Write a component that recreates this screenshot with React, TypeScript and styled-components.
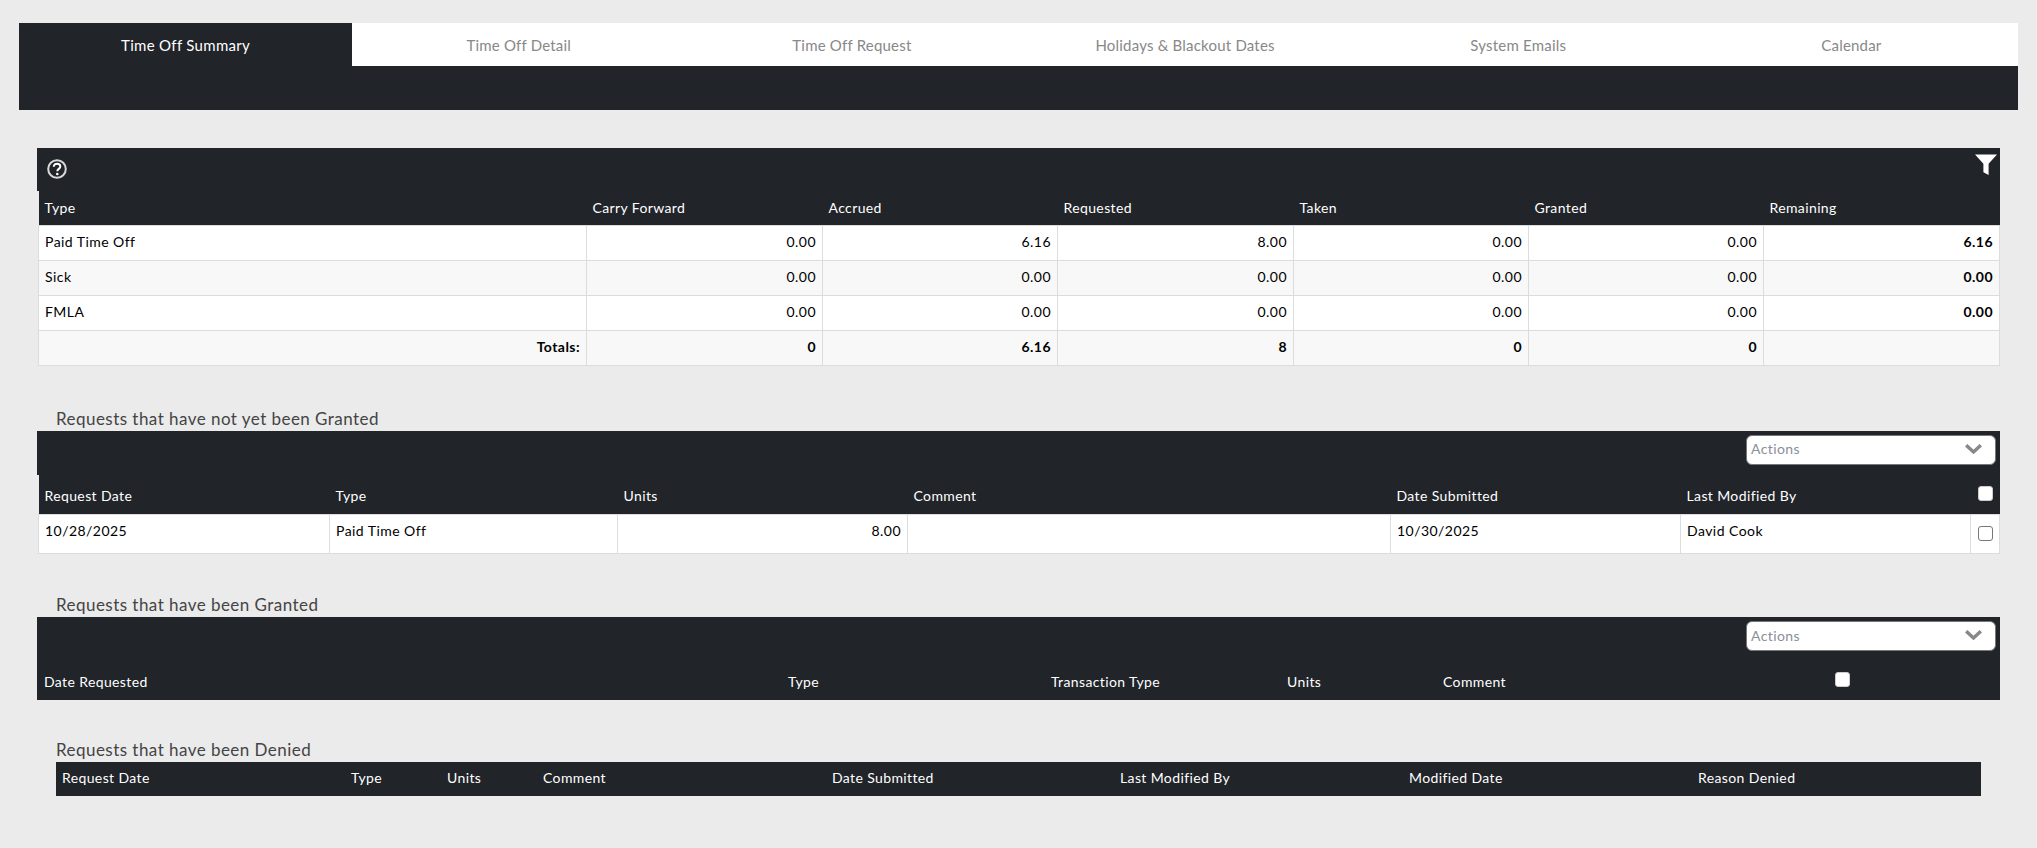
import { createGlobalStyle, styled } from 'styled-components'

const TABS = [
  'Time Off Summary',
  'Time Off Detail',
  'Time Off Request',
  'Holidays & Blackout Dates',
  'System Emails',
  'Calendar',
]

const SUMMARY_WIDTHS = [548, 236, 235, 236, 235, 235, 236]
const SUMMARY_HEAD = ['Type', 'Carry Forward', 'Accrued', 'Requested', 'Taken', 'Granted', 'Remaining']
const SUMMARY_ROWS = [
  ['Paid Time Off', '0.00', '6.16', '8.00', '0.00', '0.00', '6.16'],
  ['Sick', '0.00', '0.00', '0.00', '0.00', '0.00', '0.00'],
  ['FMLA', '0.00', '0.00', '0.00', '0.00', '0.00', '0.00'],
]
const SUMMARY_TOTALS = ['Totals:', '0', '6.16', '8', '0', '0', '']

const PENDING_WIDTHS = [291, 288, 290, 483, 290, 290, 29]
const PENDING_HEAD = ['Request Date', 'Type', 'Units', 'Comment', 'Date Submitted', 'Last Modified By']

const GRANTED_WIDTHS = [744, 263, 236, 156, 250, 314]
const GRANTED_HEAD = ['Date Requested', 'Type', 'Transaction Type', 'Units', 'Comment']

const DENIED_WIDTHS = [289, 96, 96, 289, 288, 289, 289, 289]
const DENIED_HEAD = [
  'Request Date',
  'Type',
  'Units',
  'Comment',
  'Date Submitted',
  'Last Modified By',
  'Modified Date',
  'Reason Denied',
]

const HelpIcon = () => (
  <svg width="20" height="20" viewBox="0 0 20 20" fill="none">
    <circle cx="10" cy="10" r="8.8" stroke="#d8d8d8" strokeWidth="2" />
    <path d="M6.8 7.8c0-1.9 1.4-3 3.3-3s3.2 1 3.2 2.7c0 2.4-3 2.4-3 4.8" stroke="#fff" strokeWidth="2" />
    <circle cx="10.3" cy="15" r="1.3" fill="#fff" />
  </svg>
)

const FilterIcon = () => (
  <svg width="22" height="22" viewBox="0 0 22 22">
    <path d="M0 .5h22l-8.4 9.3V21l-5.2-2.8V9.8z" fill="#fff" />
  </svg>
)

const ChevronIcon = () => (
  <svg width="17" height="10" viewBox="0 0 17 10" fill="none">
    <path d="M1.2 1.2L8.5 8l7.3-6.8" stroke="#888" strokeWidth="3.4" />
  </svg>
)

const ActionsSelect = () => (
  <Select>
    <span>Actions</span>
    <ChevronIcon />
  </Select>
)

const Columns = ({ widths }: { widths: number[] }) => (
  <colgroup>
    {widths.map((w, i) => (
      <col key={i} width={w} />
    ))}
  </colgroup>
)

export default function App() {
  return (
    <Page>
      <GlobalStyle />
      <TabBar>
        <TabRow>
          {TABS.map((t, i) => (
            <Tab key={t} $active={i === 0}>
              {t}
            </Tab>
          ))}
        </TabRow>
      </TabBar>

      <Panel $top={38}>
        <Toolbar $height={43} $spread>
          <HelpSlot>
            <HelpIcon />
          </HelpSlot>
          <FilterSlot>
            <FilterIcon />
          </FilterSlot>
        </Toolbar>
        <InsetTable>
          <Columns widths={SUMMARY_WIDTHS} />
          <thead>
            <tr>
              {SUMMARY_HEAD.map((h) => (
                <HeadCell key={h} $height={34} $low>
                  {h}
                </HeadCell>
              ))}
            </tr>
          </thead>
          <tbody>
            {SUMMARY_ROWS.map((row, r) => (
              <BodyRow key={row[0]} $alt={r % 2 === 1}>
                {row.map((c, i) => (
                  <BodyCell key={i} $height={35} $middle $right={i > 0} $bold={i === 6}>
                    {c}
                  </BodyCell>
                ))}
              </BodyRow>
            ))}
            <BodyRow $alt>
              {SUMMARY_TOTALS.map((c, i) => (
                <BodyCell key={i} $height={35} $middle $right $bold>
                  {c}
                </BodyCell>
              ))}
            </BodyRow>
          </tbody>
        </InsetTable>
      </Panel>

      <SectionTitle $top={43} $bottom={2}>
        Requests that have not yet been Granted
      </SectionTitle>
      <Panel>
        <Toolbar $height={44}>
          <ActionsSelect />
        </Toolbar>
        <InsetTable>
          <Columns widths={PENDING_WIDTHS} />
          <thead>
            <tr>
              {PENDING_HEAD.map((h) => (
                <HeadCell key={h} $height={40}>
                  {h}
                </HeadCell>
              ))}
              <HeadCell $height={40} $flush>
                <HeadCheck />
              </HeadCell>
            </tr>
          </thead>
          <tbody>
            <BodyRow>
              <BodyCell $height={39}>10/28/2025</BodyCell>
              <BodyCell $height={39}>Paid Time Off</BodyCell>
              <BodyCell $height={39} $right>
                8.00
              </BodyCell>
              <BodyCell $height={39} />
              <BodyCell $height={39}>10/30/2025</BodyCell>
              <BodyCell $height={39}>David Cook</BodyCell>
              <BodyCell $height={39}>
                <RowCheck />
              </BodyCell>
            </BodyRow>
          </tbody>
        </InsetTable>
      </Panel>

      <SectionTitle $top={41} $bottom={2}>
        Requests that have been Granted
      </SectionTitle>
      <Panel>
        <Toolbar $height={44}>
          <ActionsSelect />
        </Toolbar>
        <FullTable>
          <Columns widths={GRANTED_WIDTHS} />
          <thead>
            <tr>
              {GRANTED_HEAD.map((h) => (
                <HeadCell key={h} $height={39} $wide>
                  {h}
                </HeadCell>
              ))}
              <HeadCell $height={39} $center>
                <HeadCheck />
              </HeadCell>
            </tr>
          </thead>
        </FullTable>
      </Panel>

      <SectionTitle $top={40} $bottom={2}>
        Requests that have been Denied
      </SectionTitle>
      <DeniedTable>
        <Columns widths={DENIED_WIDTHS} />
        <thead>
          <tr>
            {DENIED_HEAD.map((h) => (
              <HeadCell key={h} $height={34}>
                {h}
              </HeadCell>
            ))}
          </tr>
        </thead>
      </DeniedTable>
    </Page>
  )
}

const GlobalStyle = createGlobalStyle`
  html, body {
    margin: 0;
    background: #ebebeb;
  }
  * {
    box-sizing: border-box;
  }
`

const DARK = '#212429'
const FONT = `Lato, 'Liberation Sans', sans-serif`

const Page = styled.div`
  width: 2037px;
  height: 848px;
  padding: 23px 19px 0;
  overflow: hidden;
  background: #ebebeb;
  font-family: ${FONT};
  font-size: 14px;
  color: #000;
`

const TabBar = styled.nav`
  background: ${DARK};
  width: 1999px;
  padding-bottom: 44px;
`

const TabRow = styled.div`
  display: grid;
  grid-template-columns: repeat(6, 1fr);
  background: #fff;
`

const Tab = styled.div<{ $active?: boolean }>`
  height: 43px;
  display: flex;
  align-items: center;
  justify-content: center;
  font-size: 15px;
  letter-spacing: ${(p) => (p.$active ? 0.3 : 0.2)}px;
  background: ${(p) => (p.$active ? DARK : '#fff')};
  color: ${(p) => (p.$active ? '#fff' : '#888')};
`

const Panel = styled.section<{ $top?: number }>`
  width: 1963px;
  margin: ${(p) => p.$top ?? 0}px 0 0 18px;
`

const Toolbar = styled.div<{ $height: number; $spread?: boolean }>`
  height: ${(p) => p.$height}px;
  background: ${DARK};
  display: flex;
  justify-content: ${(p) => (p.$spread ? 'space-between' : 'flex-end')};
  align-items: flex-start;
  padding: 4px;
`

const HelpSlot = styled.div`
  padding: 7px 0 0 6px;
`

const FilterSlot = styled.div`
  padding-top: 2px;
  margin-right: -1px;
`

const Select = styled.div`
  width: 250px;
  height: 30px;
  display: flex;
  align-items: center;
  justify-content: space-between;
  padding: 0 13px 2px 4px;
  background: #fff;
  border: 1px solid #777;
  border-radius: 6px;
  font-size: 14px;
  letter-spacing: 0.4px;
  color: #8a8f98;
`

const BaseTable = styled.table`
  border-collapse: collapse;
  table-layout: fixed;
`

const InsetTable = styled(BaseTable)`
  width: 1961px;
  margin-left: 1px;
`

const FullTable = styled(BaseTable)`
  width: 1963px;
`

const DeniedTable = styled(BaseTable)`
  width: 1925px;
  margin-left: 37px;
`

const HeadCell = styled.th<{
  $height: number
  $flush?: boolean
  $center?: boolean
  $wide?: boolean
  $low?: boolean
}>`
  height: ${(p) => p.$height}px;
  padding: 0 7px ${(p) => (p.$low ? 8 : 9)}px ${(p) => (p.$flush ? 0 : p.$wide ? 7 : 6)}px;
  background: ${DARK};
  color: #fff;
  font-size: 14px;
  font-weight: 400;
  letter-spacing: 0.38px;
  line-height: 18px;
  text-align: ${(p) => (p.$flush ? 'right' : p.$center ? 'center' : 'left')};
  vertical-align: bottom;
`

const BodyRow = styled.tr<{ $alt?: boolean }>`
  background: ${(p) => (p.$alt ? '#f8f8f8' : '#fff')};
`

const BodyCell = styled.td<{
  $height: number
  $middle?: boolean
  $right?: boolean
  $bold?: boolean
}>`
  height: ${(p) => p.$height}px;
  padding: ${(p) => (p.$middle ? '0 6px 2px' : '7px 6px 0')};
  border: 1px solid #dcdcdc;
  font-size: 14px;
  letter-spacing: 0.45px;
  line-height: 18px;
  font-weight: ${(p) => (p.$bold ? 700 : 400)};
  text-align: ${(p) => (p.$right ? 'right' : 'left')};
  vertical-align: ${(p) => (p.$middle ? 'middle' : 'top')};
`

const HeadCheck = styled.span`
  display: inline-block;
  width: 15px;
  height: 15px;
  margin-bottom: 4px;
  background: #fff;
  border: 1px solid #ccc;
  border-radius: 3px;
  vertical-align: bottom;
`

const RowCheck = styled.span`
  display: block;
  width: 15px;
  height: 15px;
  margin: 4px 0 0 1px;
  background: #fff;
  border: 1px solid #777;
  border-radius: 3px;
`

const SectionTitle = styled.h3<{ $top: number; $bottom: number }>`
  margin: ${(p) => p.$top}px 0 ${(p) => p.$bottom}px 37px;
  height: 20px;
  font-size: 17px;
  line-height: 20px;
  font-weight: 400;
  letter-spacing: 0.46px;
  color: #444;
`
